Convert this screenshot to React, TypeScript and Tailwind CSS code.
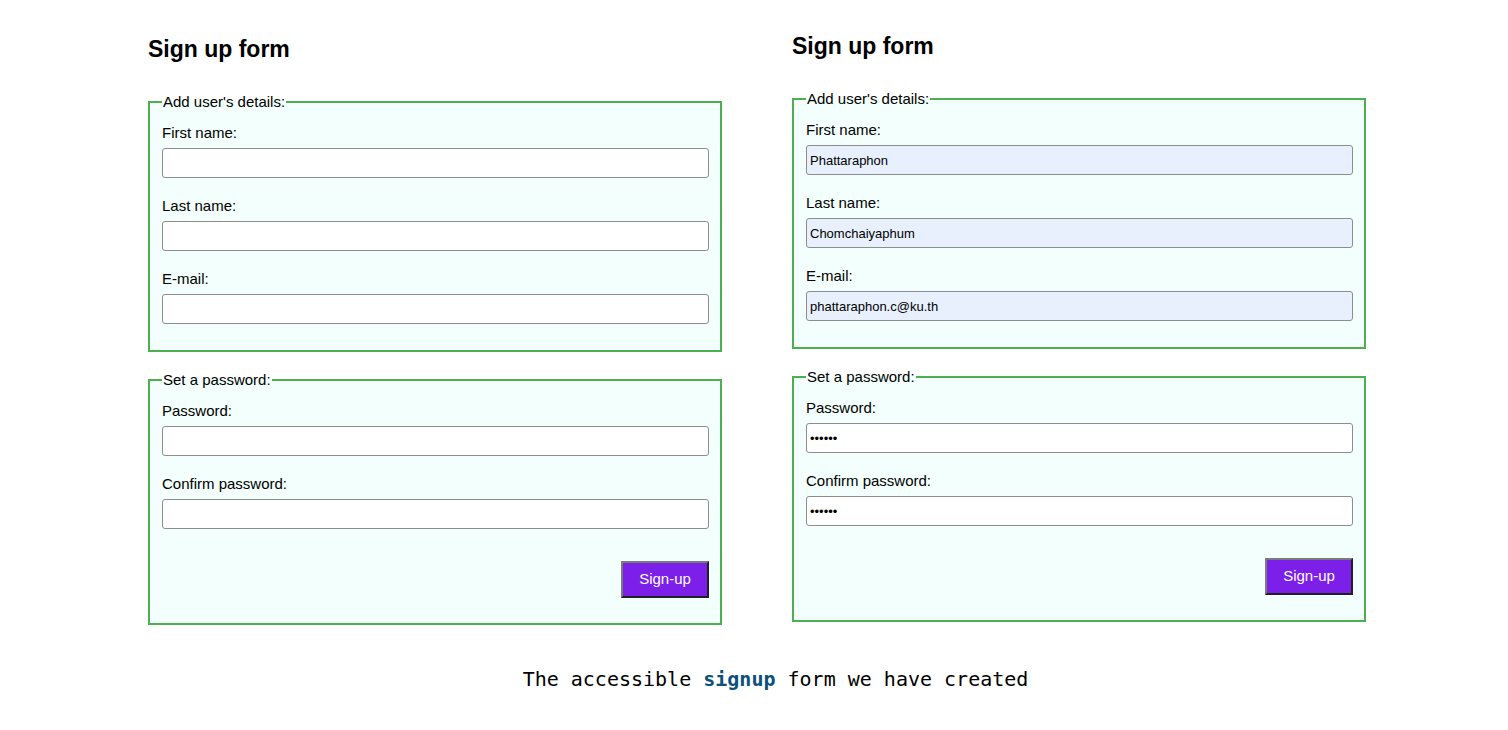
import React from "react";

type Field = { label: string; type: string; value?: string };

const detailFields = (filled: boolean): Field[] => [
  { label: "First name:", type: "text", value: filled ? "Phattaraphon" : "" },
  { label: "Last name:", type: "text", value: filled ? "Chomchaiyaphum" : "" },
  { label: "E-mail:", type: "email", value: filled ? "phattaraphon.c@ku.th" : "" },
];

const passwordFields = (filled: boolean): Field[] => [
  { label: "Password:", type: "password", value: filled ? "123456" : "" },
  { label: "Confirm password:", type: "password", value: filled ? "123456" : "" },
];

const FieldRow = ({ field, last }: { field: Field; last: boolean }) => {
  const autofilled = field.value && field.type !== "password";
  return (
    <div className={last ? "" : "mb-[19px]"}>
      <label className="block text-[15px] leading-[17px] text-black">{field.label}</label>
      <input
        type={field.type}
        value={field.value}
        readOnly
        className={`mt-[7px] block h-[30px] w-full rounded-[3px] border border-[#8d8d8d] px-[3px] text-[13px] text-black outline-none ${
          autofilled ? "bg-[#e8f0fe]" : "bg-white"
        }`}
      />
    </div>
  );
};

const Group = ({
  legend,
  fields,
  children,
  className = "",
}: {
  legend: string;
  fields: Field[];
  children?: React.ReactNode;
  className?: string;
}) => (
  <fieldset className={`border-2 border-[#4caf50] bg-[#f3fffd] pl-3 pr-[11px] pt-[14px] ${className}`}>
    <legend className="px-[1px] text-[15px] leading-[17px] text-black">{legend}</legend>
    {fields.map((f, i) => (
      <FieldRow key={f.label} field={f} last={i === fields.length - 1} />
    ))}
    {children}
  </fieldset>
);

const SignupForm = ({ filled, className = "" }: { filled: boolean; className?: string }) => (
  <div className={`w-[574px] ${className}`}>
    <h2 className="mb-[30px] text-[23px] font-bold leading-[28px] text-black">Sign up form</h2>
    <Group legend="Add user's details:" fields={detailFields(filled)} className="pb-[26px]" />
    <Group legend="Set a password:" fields={passwordFields(filled)} className="mt-[19px] pb-[25px]">
      <div className="mt-[32px] flex justify-end">
        <button className="h-[37px] w-[88px] border-2 border-b-[#202020] border-l-[#7a7a7a] border-r-[#202020] border-t-[#7a7a7a] bg-[#7c1fe8] text-[15px] text-white">
          Sign-up
        </button>
      </div>
    </Group>
  </div>
);

export default function App() {
  return (
    <div className="min-h-[730px] w-[1508px] bg-white font-['Liberation_Sans',Arial,sans-serif]">
      <div className="flex gap-[70px] pl-[148px] pt-[32px]">
        <SignupForm filled={false} className="pt-[3px]" />
        <SignupForm filled={true} />
      </div>
      <p className="mt-[42px] pl-[43px] text-center font-['DejaVu_Sans_Mono',monospace] text-[20px] leading-[24px] text-black">
        The accessible <strong className="text-[#0b4f7c]">signup</strong> form we have created
      </p>
    </div>
  );
}
